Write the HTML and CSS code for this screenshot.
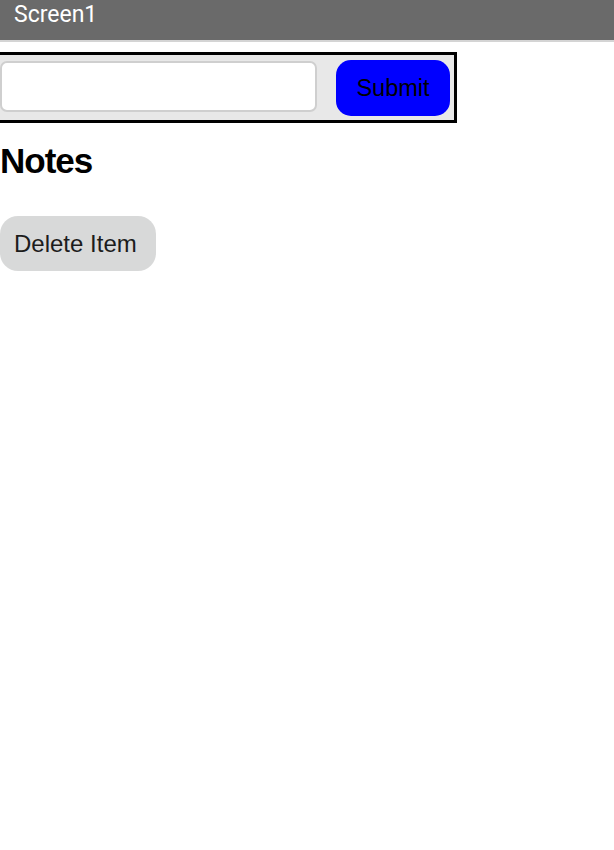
FILE: index.html
```html
<!DOCTYPE html>
<html>
<head>
<meta charset="utf-8">
<link rel="stylesheet" href="styles.css">
</head>
<body>
<div class="titlebar">Screen1</div>
<div class="page">
  <div class="form-box">
    <input class="note-input" type="text">
    <button class="submit-btn">Submit</button>
  </div>
  <h1 class="heading">Notes</h1>
  <button class="delete-btn">Delete Item</button>
</div>
</body>
</html>
```
FILE: styles.css
```css
html, body {
  margin: 0;
  padding: 0;
  background: #ffffff;
}
body {
  width: 614px;
  height: 850px;
  overflow: hidden;
  font-family: "Liberation Sans", Arial, sans-serif;
}
.titlebar {
  height: 40px;
  background: #6a6a6a;
  border-bottom: 2px solid #d4d4d4;
  color: #ffffff;
  font-family: Roboto, "Noto Sans", sans-serif;
  font-size: 23px;
  line-height: 29px;
  padding-left: 14px;
  box-sizing: content-box;
}
.page {
  padding-top: 10px;
}
.form-box {
  display: flex;
  align-items: flex-start;
  width: 463px;
  height: 71px;
  margin-left: -6px;
  border: 3px solid #000000;
  background: #e8e8e8;
  padding: 0 3px;
  box-sizing: border-box;
  gap: 19px;
}
.note-input {
  width: 317px;
  height: 51px;
  margin-top: 6px;
  box-sizing: border-box;
  border: 2px solid #cfcfcf;
  border-radius: 7px;
  background: #ffffff;
  padding: 0 8px;
  font-size: 20px;
  outline: none;
  flex: none;
}
.submit-btn {
  width: 114px;
  height: 56px;
  margin-top: 5px;
  border: none;
  border-radius: 15px;
  background: #0000ff;
  color: #000000;
  font-family: "Liberation Sans", Arial, sans-serif;
  font-size: 23.5px;
  padding: 0;
  flex: none;
}
.heading {
  margin: 18px 0 0 0;
  font-size: 35px;
  letter-spacing: -1px;
  font-weight: bold;
  line-height: 40px;
  color: #000000;
}
.delete-btn {
  display: block;
  margin-top: 35px;
  width: 156px;
  height: 55px;
  border: none;
  border-radius: 18px;
  background: #d8d9d9;
  color: #1c1c1c;
  font-family: "Liberation Sans", Arial, sans-serif;
  font-size: 24px;
  text-align: left;
  padding: 0 0 0 14px;
}
```
